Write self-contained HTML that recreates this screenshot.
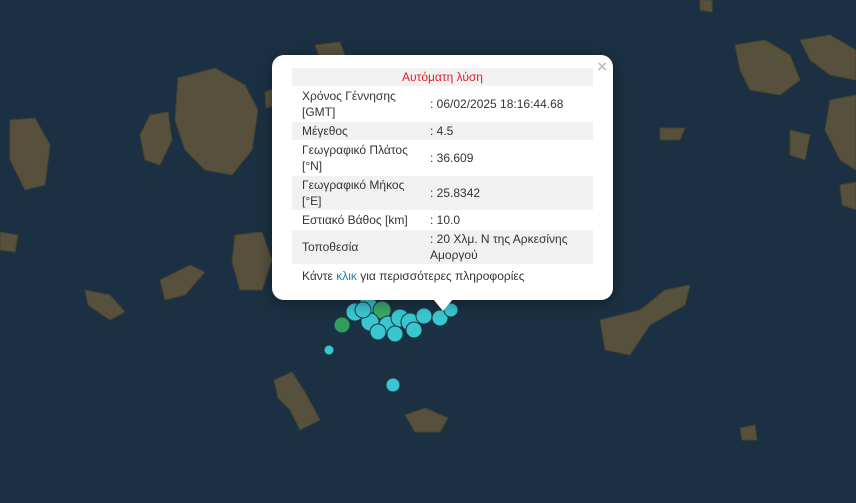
<!DOCTYPE html>
<html><head><meta charset="utf-8"><style>
body{margin:0;width:856px;height:503px;overflow:hidden;background:#1b3143;font-family:"Liberation Sans",sans-serif;}
.pop{position:absolute;left:272px;top:55px;width:341px;height:245px;background:#fff;border-radius:12px;box-shadow:0 3px 14px rgba(0,0,0,.4);}
.tip{position:absolute;left:433px;top:299px;width:0;height:0;border-left:10px solid transparent;border-right:10px solid transparent;border-top:12px solid #fff;}
.x{position:absolute;right:6px;top:2px;color:#c3c3c3;font-size:17px;font-weight:bold;}
table{position:absolute;left:20px;top:12px;width:301px;border-collapse:separate;border-spacing:0 1px;font-size:12px;color:#333;}
td{padding:1px 0 1px 10px;line-height:16px;vertical-align:middle;}
tr.g td{background:#f1f1f1;}
td.v{padding-left:0;}
.foot{position:absolute;left:30px;top:214px;font-size:12px;color:#333;}
.foot span{color:#2a7fa8;}
</style></head><body>
<svg width="856" height="503" style="position:absolute;left:0;top:0">
<g fill="#57503d" stroke="#45432f" stroke-width="1">
<path d="M178,78 L215,68 L245,85 L258,110 L252,150 L232,175 L205,170 L185,150 L175,120 Z"/>
<path d="M150,115 L168,112 L172,140 L160,165 L145,160 L140,135 Z"/>
<path d="M10,120 L35,118 L50,145 L45,185 L25,190 L10,160 Z"/>
<path d="M0,232 L18,235 L15,252 L0,250 Z"/>
<path d="M235,235 L262,232 L272,260 L262,290 L240,290 L232,262 Z"/>
<path d="M160,280 L190,265 L205,272 L185,295 L165,300 Z"/>
<path d="M85,290 L110,295 L125,312 L110,320 L88,305 Z"/>
<path d="M600,320 L640,310 L665,290 L690,285 L685,305 L650,325 L630,355 L605,350 Z"/>
<path d="M274,380 L292,372 L305,392 L320,420 L300,430 L290,410 L278,398 Z"/>
<path d="M405,415 L425,408 L448,418 L440,432 L415,432 Z"/>
<path d="M315,45 L340,42 L345,55 L320,58 Z"/>
<path d="M265,92 L275,88 L278,105 L266,108 Z"/>
<path d="M540,130 L560,125 L570,140 L550,148 Z"/>
<path d="M660,128 L685,128 L680,140 L660,140 Z"/>
<path d="M735,45 L765,40 L790,55 L800,80 L780,95 L750,90 L740,70 Z"/>
<path d="M800,40 L830,35 L856,50 L856,80 L830,75 L810,60 Z"/>
<path d="M830,100 L856,95 L856,170 L840,160 L825,130 Z"/>
<path d="M790,130 L810,135 L805,160 L790,155 Z"/>
<path d="M840,185 L856,182 L856,210 L842,205 Z"/>
<path d="M700,0 L712,0 L712,12 L700,10 Z"/>
<path d="M740,428 L755,425 L757,440 L742,440 Z"/>
</g>
<g stroke="#1a3a44" stroke-width="1" fill="#38c6d0">
<circle cx="342" cy="325" r="8" fill="#2f9e5c"/>
<circle cx="355" cy="312" r="9"/><circle cx="368" cy="305" r="9"/><circle cx="382" cy="310" r="9" fill="#3aa86a"/>
<circle cx="370" cy="322" r="9"/><circle cx="388" cy="325" r="9"/><circle cx="400" cy="318" r="9"/>
<circle cx="378" cy="332" r="8"/><circle cx="395" cy="334" r="8"/><circle cx="410" cy="322" r="9"/>
<circle cx="424" cy="316" r="8"/><circle cx="440" cy="318" r="8"/><circle cx="451" cy="310" r="7"/>
<circle cx="363" cy="310" r="8"/><circle cx="414" cy="330" r="8"/>
<circle cx="329" cy="350" r="5"/><circle cx="393" cy="385" r="7"/>
</g>
</svg>
<div class="pop"><div class="x">×</div>
<table>
<tr class="g"><td colspan="2" style="text-align:center;color:#e0202a;padding:1px 0;">Αυτόματη λύση</td></tr>
<tr><td style="width:128px">Χρόνος Γέννησης<br>[GMT]</td><td class="v">: 06/02/2025 18:16:44.68</td></tr>
<tr class="g"><td>Μέγεθος</td><td class="v">: 4.5</td></tr>
<tr><td>Γεωγραφικό Πλάτος<br>[°N]</td><td class="v">: 36.609</td></tr>
<tr class="g"><td>Γεωγραφικό Μήκος<br>[°E]</td><td class="v">: 25.8342</td></tr>
<tr><td>Εστιακό Βάθος [km]</td><td class="v">: 10.0</td></tr>
<tr class="g"><td>Τοποθεσία</td><td class="v">: 20 Χλμ. Ν της Αρκεσίνης<br>Αμοργού</td></tr>
</table>
<div class="foot">Κάντε <span>κλικ</span> για περισσότερες πληροφορίες</div>
</div>
<div class="tip"></div>
</body></html>
